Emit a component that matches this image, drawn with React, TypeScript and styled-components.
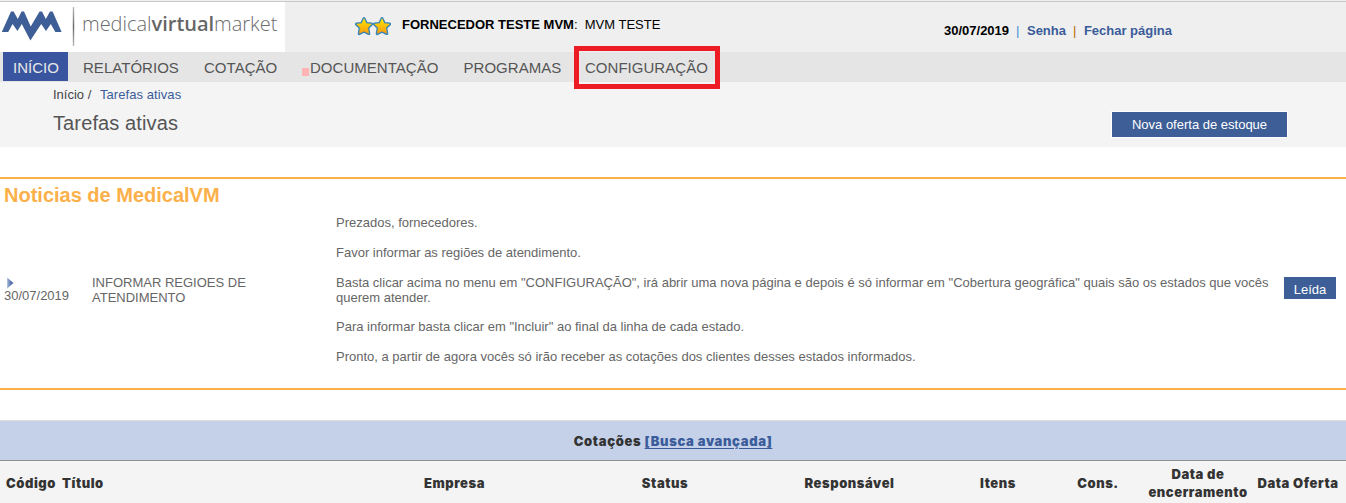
import React from 'react';
import styled, { createGlobalStyle } from 'styled-components';

const GlobalStyle = createGlobalStyle`
  * { box-sizing: border-box; }
  body { margin: 0; background: #fff; font: 13px/15px 'Liberation Sans', Arial, sans-serif; color: #666; overflow: hidden; }
  a { text-decoration: none; color: #3b5c9a; }
  p { margin: 0; }
`;

const Page = styled.div`width: 1346px; height: 503px; overflow: hidden;`;

const TopBar = styled.header`
  display: flex;
  height: 52px;
  padding-top: 1px;
  background: #efefef;
`;
const TopLine = styled.div`
  display: flex;
  flex: 1;
  border-top: 1px solid #c8c8c8;
`;
const Logo = styled.div`
  display: flex;
  width: 285px;
  height: 50px;
  background: #fff;
`;
const LogoMark = styled.svg`width: 82px; height: 50px; flex: none;`;
const LogoText = styled.div`
  font: 300 20px/44px 'Open Sans', sans-serif;
  letter-spacing: -0.02px;
  color: #6c6c6c;
  white-space: nowrap;
  b { font-weight: 600; color: #666; }
`;
const Supplier = styled.div`
  display: flex;
  width: 658px;
  padding: 14px 0 0 70px;
  color: #000;
  white-space: pre;
`;
const SupplierName = styled.div`padding-top: 1px;`;
const Stars = styled.svg`width: 36px; height: 20px; margin-right: 11px;`;
const Session = styled.div`
  padding: 21px 0 0 1px;
  font-weight: bold;
  color: #000;
  display: flex;
`;
const Sep = styled.span<{ $tone: string }>`
  margin: 0 7.5px 0 7px;
  font-weight: normal;
  color: ${p => p.$tone};
`;

const Nav = styled.nav`
  display: grid;
  position: relative;
  grid-template-columns: 70px 121px 106px 153.5px 121.5px 146px;
  height: 30px;
  padding-left: 3px;
  background: #e5e5e5;
  font-size: 15px;
  line-height: 31px;
`;
const NavItem = styled.a<{ $active?: boolean }>`
  justify-self: start;
  height: 29px;
  width: ${p => (p.$active ? '65px' : 'auto')};
  padding-left: 10px;
  white-space: nowrap;
  letter-spacing: 0.03px;
  color: ${p => (p.$active ? '#e8e8e8' : '#555')};
  background: ${p => (p.$active ? '#3a559f' : 'transparent')};
`;
const Marker = styled.i`
  position: absolute;
  left: 302px;
  top: 16px;
  width: 7px;
  height: 8px;
  background: #ffb3b3;
`;
const Highlight = styled.div`
  position: absolute;
  left: 574px;
  top: -6px;
  width: 146px;
  height: 43px;
  border: 5px solid #ed1c24;
`;

const PageHead = styled.section`
  display: flex;
  justify-content: space-between;
  height: 65px;
  padding: 5px 58px 0 53px;
  background: #f4f4f4;
`;
const Crumbs = styled.div`
  color: #444;
  a { margin-left: 5px; letter-spacing: 0.08px; }
`;
const Title = styled.h1`
  margin: 9px 0 0;
  font-size: 20px;
  line-height: 24px;
  font-weight: normal;
  letter-spacing: 0.12px;
  color: #555;
`;
const Button = styled.button<{ $w: number; $h: number; $drop?: number }>`
  width: ${p => p.$w}px;
  height: ${p => p.$h}px;
  padding: ${p => p.$drop ?? 0}px 0 0;
  border: 0;
  background: #3d5e96;
  color: #fff;
  font: 13px/15px 'Liberation Sans', Arial, sans-serif;
`;
const Action = styled.div`
  height: 27px;
  margin-top: 24px;
  border: 1px solid #fff;
  display: flex;
`;

const News = styled.section`
  height: 213px;
  margin-top: 30px;
  border: solid #fbb04a;
  border-width: 2px 0;
`;
const NewsTitle = styled.h2`
  margin: 0;
  padding: 4px 0 0 4px;
  font-size: 20px;
  line-height: 24px;
  color: #fbb04a;
`;
const NewsRow = styled.div`
  display: grid;
  grid-template-columns: 88px 244px 948px 52px;
  padding: 8px 0 0 4px;
  align-items: center;
`;
const DateCell = styled.div`
  display: grid;
  line-height: 13px;
`;
const Arrow = styled.svg`width: 7px; height: 12px; margin-left: 3px;`;
const Subject = styled.div`width: 170px;`;
const Message = styled.div`
  display: grid;
  gap: 15px;
  padding-right: 10px;
  white-space: nowrap;
  p:nth-child(4) { margin-top: -1px; }
`;
const ReadCell = styled.div`display: flex; padding-bottom: 4px;`;

const QuoteBar = styled.div`
  height: 41px;
  margin-top: 30px;
  border-top: 1px solid #dcdcdc;
  border-bottom: 1px solid #909090;
  background: #c4d1e9;
  text-align: center;
  font: 900 13px/40px Inter, sans-serif;
  letter-spacing: 0.66px;
  color: #333;
  a { text-decoration: underline; text-underline-offset: 2px; }
`;
const TableHead = styled.div`
  display: grid;
  grid-template-columns: 62px 268px 249px 172px 197px 100px 100px 100px 100px;
  align-items: center;
  height: 42px;
  background: #f4f4f4;
  font: 900 13px/18px Inter, sans-serif;
  letter-spacing: 0.56px;
  color: #333;
`;
const HeadCell = styled.div<{ $left?: number }>`
  text-align: ${p => (p.$left === undefined ? 'center' : 'left')};
  padding-left: ${p => p.$left ?? 0}px;
  padding-top: 2px;
  white-space: pre;
`;

const star = 'M9 1.6 11.3 6.4 16.6 7.1 12.8 10.8 13.8 16.6 9 14.2 4.2 16.6 5.2 10.8 1.4 7.1 6.7 6.4Z';

const menu = ['INÍCIO', 'RELATÓRIOS', 'COTAÇÃO', 'DOCUMENTAÇÃO', 'PROGRAMAS', 'CONFIGURAÇÃO'];
const message = [
  'Prezados, fornecedores.',
  'Favor informar as regiões de atendimento.',
  ['Basta clicar acima no menu em "CONFIGURAÇÃO", irá abrir uma nova página e depois é só informar em "Cobertura geográfica" quais são os estados que vocês', 'querem atender.'],
  'Para informar basta clicar em "Incluir" ao final da linha de cada estado.',
  'Pronto, a partir de agora vocês só irão receber as cotações dos clientes desses estados informados.',
];
const columns = ['Empresa', 'Status', 'Responsável', 'Itens', 'Cons.', 'Data de\nencerramento', 'Data Oferta'];

export default function App() {
  return (
    <Page>
      <GlobalStyle />
      <TopBar>
        <TopLine>
          <Logo>
            <LogoMark viewBox="0 2 82 50">
              <defs>
                <linearGradient id="rule" x1="0" y1="0" x2="0" y2="1">
                  <stop offset="0" stopColor="#bbb" />
                  <stop offset="0.5" stopColor="#666" />
                  <stop offset="1" stopColor="#bbb" />
                </linearGradient>
              </defs>
              <path
                d="M1.8 32 11 11.4H13.6L17.8 19 21.6 11.4H24L30.7 26.5 39.6 11.4H42L45.8 19 50 11.4H52.6L61.6 32H55.3L50.8 24 46 31 41.2 24 30.4 40.5 21.8 24 17.4 31 12.6 24 8.2 32Z"
                fill="#3d5e96"
              />
              <rect x="72.8" y="7" width="1.4" height="39" fill="url(#rule)" />
            </LogoMark>
            <LogoText>medical<b>virtual</b>market</LogoText>
          </Logo>
          <Supplier>
            <Stars viewBox="0 0 36 20">
              <defs>
                <linearGradient id="gold" x1="0" y1="0" x2="0" y2="1">
                  <stop offset="0" stopColor="#ffe600" />
                  <stop offset="1" stopColor="#f79a10" />
                </linearGradient>
              </defs>
              <g transform="translate(0 1)" stroke="#2f83bd" strokeWidth="3" strokeLinejoin="round">
                <path d={star} />
                <path d={star} transform="translate(18 0)" />
              </g>
              <g transform="translate(0 1)" fill="url(#gold)" stroke="url(#gold)" strokeWidth="0.4">
                <path d={star} />
                <path d={star} transform="translate(18 0)" />
              </g>
            </Stars>
            <SupplierName><b>FORNECEDOR TESTE MVM</b>{':  MVM TESTE'}</SupplierName>
          </Supplier>
          <Session>
            30/07/2019<Sep $tone="#3b8fd0">|</Sep><a>Senha</a><Sep $tone="#b86a00">|</Sep><a>Fechar página</a>
          </Session>
        </TopLine>
      </TopBar>
      <Nav>
        {menu.map((m, i) => <NavItem key={m} $active={i === 0}>{m}</NavItem>)}
        <Marker />
        <Highlight />
      </Nav>
      <PageHead>
        <div>
          <Crumbs>Início / <a>Tarefas ativas</a></Crumbs>
          <Title>Tarefas ativas</Title>
        </div>
        <Action><Button $w={175} $h={25}>Nova oferta de estoque</Button></Action>
      </PageHead>
      <News>
        <NewsTitle>Noticias de MedicalVM</NewsTitle>
        <NewsRow>
          <DateCell>
            <Arrow viewBox="0 0 7 12">
              <defs>
                <linearGradient id="tip"><stop offset="0" stopColor="#9fb4dc" /><stop offset="1" stopColor="#2b4a8c" /></linearGradient>
              </defs>
              <path d="M0.2 0.5 6.4 6 0.2 11.5Z" fill="url(#tip)" />
            </Arrow>
            30/07/2019
          </DateCell>
          <Subject>INFORMAR REGIOES DE ATENDIMENTO</Subject>
          <Message>
            {message.map((m, i) => (
              <p key={i}>{Array.isArray(m) ? <>{m[0]}<br />{m[1]}</> : m}</p>
            ))}
          </Message>
          <ReadCell><Button $w={52} $h={22} $drop={3}>Leída</Button></ReadCell>
        </NewsRow>
      </News>
      <QuoteBar>Cotações <a>[Busca avançada]</a></QuoteBar>
      <TableHead>
        <HeadCell $left={6}>Código</HeadCell>
        <HeadCell $left={0}>Título</HeadCell>
        {columns.map(c => <HeadCell key={c}>{c}</HeadCell>)}
      </TableHead>
    </Page>
  );
}
